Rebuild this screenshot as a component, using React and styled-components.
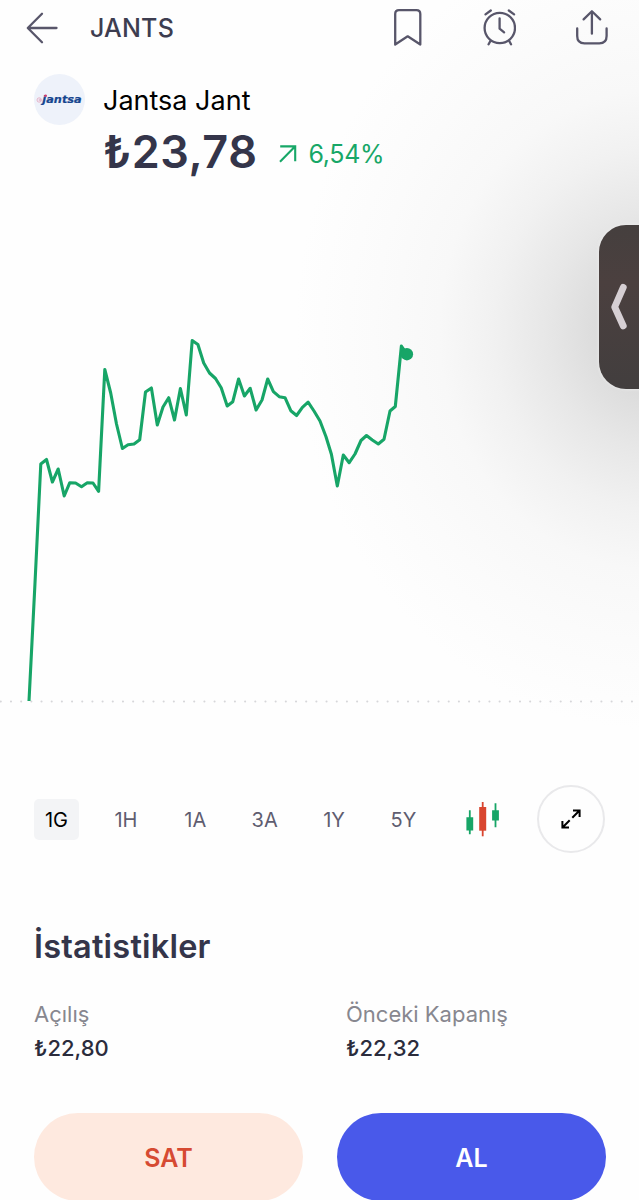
import { useState } from "react";
import styled, { createGlobalStyle } from "styled-components";

const RANGES = ["1G", "1H", "1A", "3A", "1Y", "5Y"];

const STATS = [
  { label: "Açılış", value: "₺22,80" },
  { label: "Önceki Kapanış", value: "₺22,32" },
];

const PRICES = [
  [29, 701], [34.9, 585], [40.8, 464], [46.5, 459.5], [52.4, 482], [58.2, 469],
  [64.2, 496], [69.8, 482.7], [75.6, 483], [81.5, 486.7], [87.3, 482.7],
  [93, 483], [98.6, 491.3], [104.8, 369.5], [110.7, 393], [116.5, 424],
  [122.4, 448.5], [128, 444.7], [134, 444], [139.7, 439.7], [145.5, 392],
  [151.4, 388], [157.3, 425], [163, 407], [168.7, 397.7], [174.5, 420],
  [180.4, 388.5], [186.3, 415], [192.2, 340.5], [197.9, 344.5], [203.7, 363],
  [209.5, 373], [215.5, 378.5], [221.2, 387.7], [227.2, 406], [232.8, 401.7],
  [238.6, 379], [244.4, 396], [250.2, 388.3], [256.1, 410], [262, 400],
  [267.7, 379], [273.4, 391.7], [279.2, 396.7], [285, 397.7], [290.8, 410.7],
  [296.6, 415.5], [302.4, 407.3], [308.1, 402.2], [314, 411], [320, 421],
  [326, 436.7], [331.4, 454.3], [337.3, 486], [343.3, 455], [349.2, 462.7],
  [355, 454], [361, 440.5], [366.5, 435.5], [372.3, 440], [378.3, 444],
  [384, 439.3], [390, 411], [395.3, 406.5], [401.4, 346], [406.8, 354],
];

const App = () => {
  const [range, setRange] = useState("1G");

  return (
    <>
      <GlobalStyle />
      <S.Screen>
        <S.Handle>
          <svg width="18" height="48" viewBox="0 0 18 48" fill="none">
            <path d="M13.3 4.3 L4.7 24 L13.3 43" stroke="#d6cfd3" strokeWidth="6.8" strokeLinecap="round" strokeLinejoin="round" />
          </svg>
        </S.Handle>

        <S.Header>
          <S.Icon width="32" height="32" viewBox="0 0 32 32">
            <path d="M30.5 16 H2 M16 1.7 L1.8 16 L16 30.3" />
          </S.Icon>
          <S.Symbol>JANTS</S.Symbol>
          <S.Actions>
            <S.Icon width="28" height="38" viewBox="0 0 28 38">
              <path d="M1.2 35.5 V5 Q1.2 1.2 5 1.2 H22.5 Q26.3 1.2 26.3 5 V35.5 L13.7 27.3 Z" />
            </S.Icon>
            <S.Icon width="34" height="38" viewBox="-0.8 0 34 38">
              <circle cx="17" cy="19" r="15.2" />
              <path d="M16.8 9.3 V19.7 L21.3 23.3 M2.7 5.4 L8 1.5 M31.3 5.4 L26 1.5 M7.6 32 L5.8 35.3 M26.4 32 L28.2 35.3" />
            </S.Icon>
            <S.Icon width="32" height="38" viewBox="0 0 32 38">
              <path d="M1.2 19.5 V27 Q1.2 34.3 8.5 34.3 H23.3 Q30.6 34.3 30.6 27 V19.5 M15.9 24.7 V2.3 M7.6 10.4 L15.9 2.3 L24.2 10.4" />
            </S.Icon>
          </S.Actions>
        </S.Header>

        <S.Stock>
          <S.Logo width="51" height="51" viewBox="0 0 51 51">
            <circle cx="25.5" cy="25.5" r="25.5" fill="#eef2fa" />
            <g fill="none" stroke="#e3a3bd" strokeWidth="0.8">
              <circle cx="5.2" cy="26" r="2.2" />
              <circle cx="5.9" cy="26" r="0.9" />
            </g>
            <text x="8.3" y="29.3" textLength="39.4" lengthAdjust="spacingAndGlyphs">jantsa</text>
            <circle cx="11.6" cy="21.8" r="1.3" fill="#d5386b" />
          </S.Logo>
          <S.Info>
            <S.Name>Jantsa Jant</S.Name>
            <S.PriceRow>
              <S.Price>₺23,78</S.Price>
              <S.Change>
                <svg width="18" height="18" viewBox="0 0 18 18" fill="none" stroke="#17a767" strokeWidth="2.1">
                  <path d="M1 16.8 L16 1.6 M1.2 1.4 H16.2 V16.2" />
                </svg>
                6,54%
              </S.Change>
            </S.PriceRow>
          </S.Info>
        </S.Stock>

        <S.Chart width="639" height="520" viewBox="0 200 639 520">
          <line x1="0.8" y1="701.5" x2="639" y2="701.5" stroke="#d6d6d9" strokeWidth="2.1" strokeLinecap="round" strokeDasharray="0 10.18" />
          <polyline points={PRICES.map((p) => p.join(",")).join(" ")} fill="none" stroke="#17a567" strokeWidth="3.1" strokeLinejoin="round" />
          <circle cx="406.9" cy="354.2" r="6.2" fill="#17a567" />
        </S.Chart>

        <S.Controls>
          <S.Ranges>
            {RANGES.map((item) => (
              <S.Range key={item} $active={item === range} onClick={() => setRange(item)}>
                {item}
              </S.Range>
            ))}
          </S.Ranges>
          <S.Candles width="34" height="36" viewBox="0 0.7 34 36">
            <path d="M3.8 9 V33 M29.5 2 V26" stroke="#17a567" strokeWidth="1.8" />
            <path d="M0.4 16 h6.8 v13.2 h-6.8 z M26.1 9 h6.8 v10.2 h-6.8 z" fill="#17a567" />
            <path d="M16.7 0.7 V35" stroke="#d9452f" strokeWidth="1.8" />
            <path d="M13.2 5.7 h7 v23.7 h-7 z" fill="#d9452f" />
          </S.Candles>
          <S.Expand>
            <svg width="20" height="20" viewBox="0 0 20 20" fill="none" stroke="#000" strokeWidth="2">
              <path d="M11.3 8.7 L18 2 M12 1.4 H18.6 V8 M8.7 11.3 L2 18 M1.4 12 V18.6 H8" />
            </svg>
          </S.Expand>
        </S.Controls>

        <S.SectionTitle>İstatistikler</S.SectionTitle>
        <S.Stats>
          {STATS.map((stat) => (
            <div key={stat.label}>
              <S.StatLabel>{stat.label}</S.StatLabel>
              <S.StatValue>{stat.value}</S.StatValue>
            </div>
          ))}
        </S.Stats>

        <S.Footer>
          <S.TradeButton $variant="sell">SAT</S.TradeButton>
          <S.TradeButton $variant="buy">AL</S.TradeButton>
        </S.Footer>
      </S.Screen>
    </>
  );
};

export default App;

const GlobalStyle = createGlobalStyle`
  * {
    box-sizing: border-box;
  }

  body {
    margin: 0;
    background-color: #fefefe;
    font-family: Inter, "Liberation Sans", sans-serif;
  }

  button {
    border: none;
    padding: 0;
    font-family: inherit;
  }
`;

const S = {
  Screen: styled.div`
    position: relative;
    display: flex;
    flex-direction: column;
    width: 639px;
    height: 1200px;
    overflow: hidden;
    /* wide soft shadow cast by the handle */
    background: #fefefe
      radial-gradient(
        360px 400px at 655px 330px,
        #cecece 0%,
        #dbdbdb 15%,
        #e7e7e7 30%,
        #f1f1f1 45%,
        #f8f8f8 60%,
        #fbfbfb 78%,
        #fefefe 100%
      );

    > * {
      flex-shrink: 0;
    }
  `,
  // Edge panel handle that floats over the screen
  Handle: styled.div`
    position: absolute;
    top: 225px;
    right: -30px;
    display: flex;
    align-items: center;
    width: 70px;
    height: 164px;
    padding-left: 11px;
    border-radius: 27px;
    background: linear-gradient(#453f3e, #4b403f 35%, #423e3e);
    box-shadow: 0 0 3px 1px rgba(240, 240, 240, 0.6);
  `,
  Header: styled.header`
    display: flex;
    align-items: center;
    height: 56px;
    padding: 0 31px 0 26px;
  `,
  Icon: styled.svg`
    flex-shrink: 0;
    fill: none;
    stroke: #58566a;
    stroke-width: 2.3px;
    stroke-linecap: round;
    stroke-linejoin: round;
  `,
  Symbol: styled.div`
    margin-left: 32px;
    color: #3d3d50;
    font-size: 25px;
    font-weight: 500;
    letter-spacing: 0.2px;
  `,
  Actions: styled.div`
    display: flex;
    gap: 60px;
    margin-left: auto;
  `,
  Stock: styled.section`
    display: flex;
    height: 144px;
    padding: 18px 34px 0;
  `,
  Logo: styled.svg`
    flex-shrink: 0;
    margin-right: 18px;

    text {
      fill: #17468f;
      stroke: #17468f;
      stroke-width: 0.2px;
      font-family: "DejaVu Sans", sans-serif;
      font-size: 9.6px;
      font-weight: bold;
      font-style: italic;
    }
  `,
  Info: styled.div`
    padding-top: 1px;
  `,
  Name: styled.div`
    height: 52px;
    color: #000;
    font-size: 27px;
    line-height: 52px;
  `,
  PriceRow: styled.div`
    display: flex;
    align-items: center;
    height: 50px;
    gap: 22px;
  `,
  Price: styled.div`
    color: #34354a;
    font-size: 45px;
    font-weight: 600;
    line-height: 50px;
    letter-spacing: 0.5px;
  `,
  Change: styled.div`
    display: flex;
    align-items: center;
    gap: 11px;
    margin-top: 3px;
    color: #17a767;
    font-size: 25px;
    letter-spacing: -0.3px;
  `,
  Chart: styled.svg`
    display: block;
  `,
  Controls: styled.div`
    display: flex;
    align-items: center;
    justify-content: space-between;
    height: 68px;
    margin: 65px 34px 0;
  `,
  Ranges: styled.div`
    display: flex;
    gap: 24.4px;
  `,
  Range: styled.button`
    width: 45px;
    height: 41px;
    padding-top: 1px;
    border-radius: 5px;
    background-color: ${({ $active }) => ($active ? "#f3f4f6" : "transparent")};
    color: ${({ $active }) => ($active ? "#000" : "#5f5d70")};
    font-size: 20px;
  `,
  Candles: styled.svg`
    margin: 1px -2px 0 2px;
  `,
  Expand: styled.button`
    display: flex;
    align-items: center;
    justify-content: center;
    width: 68px;
    height: 68px;
    border: 2px solid #e9e9eb;
    border-radius: 50%;
    background-color: #fefefe;
  `,
  SectionTitle: styled.h2`
    margin: 74px 34px 0;
    color: #34354a;
    font-size: 32.5px;
    font-weight: 600;
    line-height: 40px;
    letter-spacing: 0.2px;
  `,
  Stats: styled.div`
    display: grid;
    grid-template-columns: 312px 1fr;
    margin: 30px 34px 0;
  `,
  StatLabel: styled.div`
    color: #87878f;
    font-size: 22px;
    line-height: 34px;
  `,
  StatValue: styled.div`
    color: #2b2c3c;
    font-size: 22px;
    font-weight: 500;
    line-height: 34px;
  `,
  Footer: styled.footer`
    display: grid;
    grid-template-columns: 1fr 1fr;
    gap: 34px;
    margin: 48px 33px 0 34px;
  `,
  TradeButton: styled.button`
    height: 88px;
    padding-top: 2px;
    border-radius: 44px;
    background-color: ${({ $variant }) => ($variant === "buy" ? "#4959ea" : "#fee9df")};
    color: ${({ $variant }) => ($variant === "buy" ? "#fff" : "#d64a32")};
    font-size: 25px;
    font-weight: 600;
  `,
};
